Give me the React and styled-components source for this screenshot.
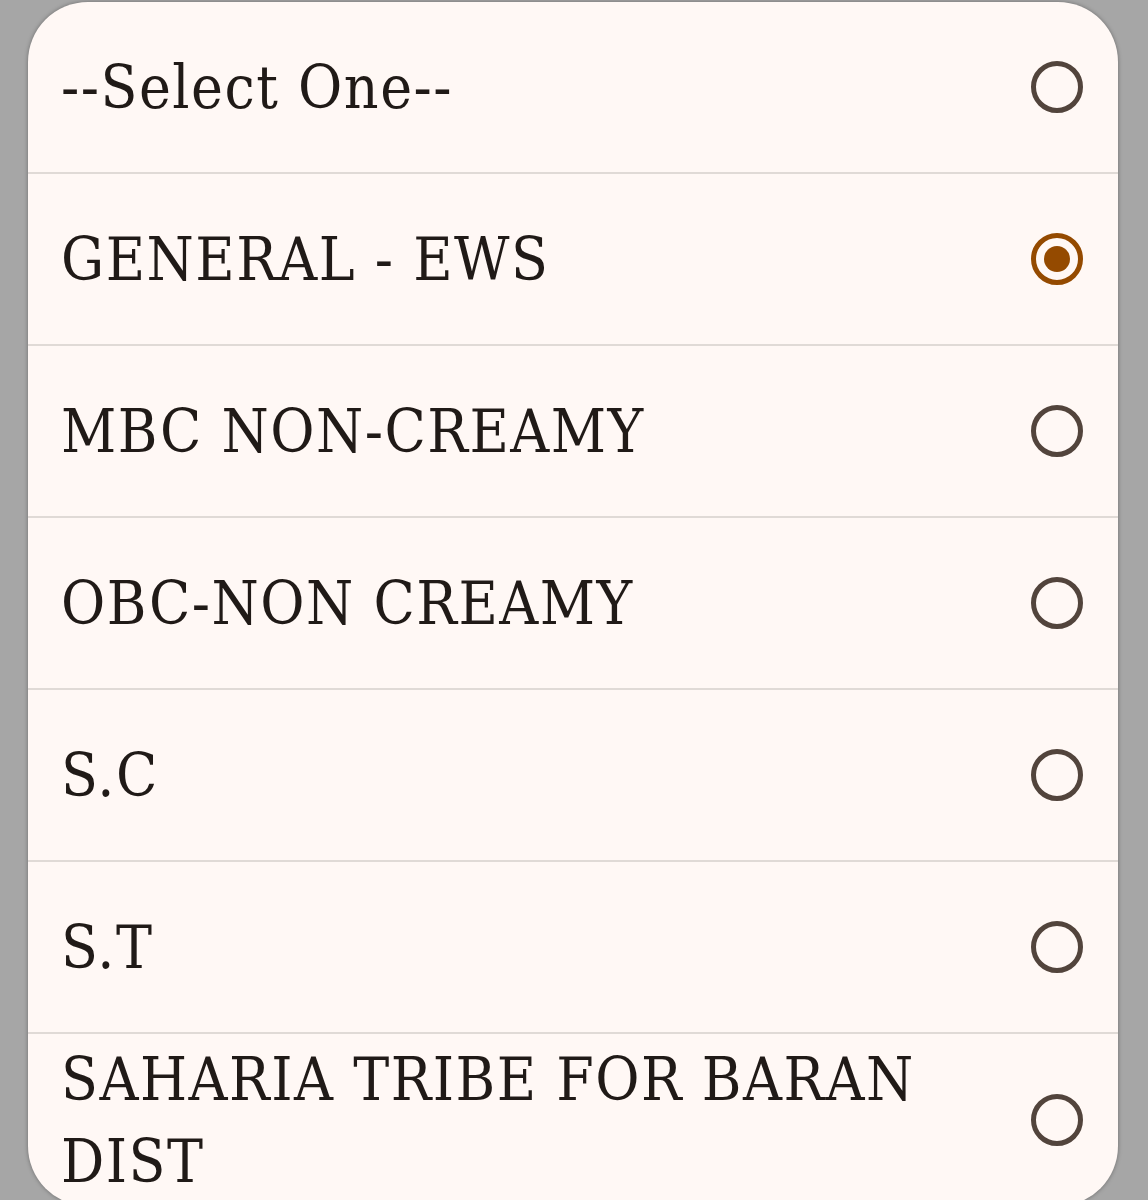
import * as React from 'react';
import styled, { createGlobalStyle } from 'styled-components';

const GlobalStyle = createGlobalStyle`
  html, body {
    margin: 0;
    padding: 0;
    background: #a6a6a6;
    overflow: hidden;
  }
`;

const Screen = styled.div`
  height: 1200px;
  padding: 2px 30px 0 28px;
  box-sizing: border-box;
  overflow: hidden;
`;

const Sheet = styled.div`
  background: #fff8f5;
  border-radius: 60px;
  box-shadow: 0 0 4px rgba(0, 0, 0, 0.35);
  overflow: hidden;
`;

const Option = styled.label`
  display: flex;
  align-items: center;
  justify-content: space-between;
  gap: 40px;
  min-height: 172px;
  padding: 0 33px 0 33px;
  border-bottom: ${props => (props.last ? 'none' : '2px solid #e0dad6')};
  box-sizing: border-box;
  cursor: pointer;
`;

const Text = styled.span`
  flex: 1;
  max-width: 900px;
  font-family: 'DejaVu Serif', 'Liberation Serif', serif;
  font-stretch: condensed;
  font-size: 60px;
  letter-spacing: 1.5px;
  line-height: 82px;
  color: #201a17;
`;

const Radio = ({ checked }) => (
  <svg width="56" height="56" viewBox="0 0 56 56">
    <circle
      cx="28"
      cy="28"
      r="23.5"
      fill="none"
      stroke={checked ? '#944a00' : '#52443c'}
      strokeWidth="5"
    />
    {checked && <circle cx="28" cy="28" r="13" fill="#944a00" />}
  </svg>
);

const options = [
  '--Select One--',
  'GENERAL - EWS',
  'MBC NON-CREAMY',
  'OBC-NON CREAMY',
  'S.C',
  'S.T',
  'SAHARIA TRIBE FOR BARAN DIST',
];

export default function App() {
  const selected = 1;

  return (
    <Screen>
      <GlobalStyle />
      <Sheet>
        {options.map((label, i) => (
          <Option key={label} last={i === options.length - 1}>
            <Text>{label}</Text>
            <Radio checked={i === selected} />
          </Option>
        ))}
      </Sheet>
    </Screen>
  );
}
